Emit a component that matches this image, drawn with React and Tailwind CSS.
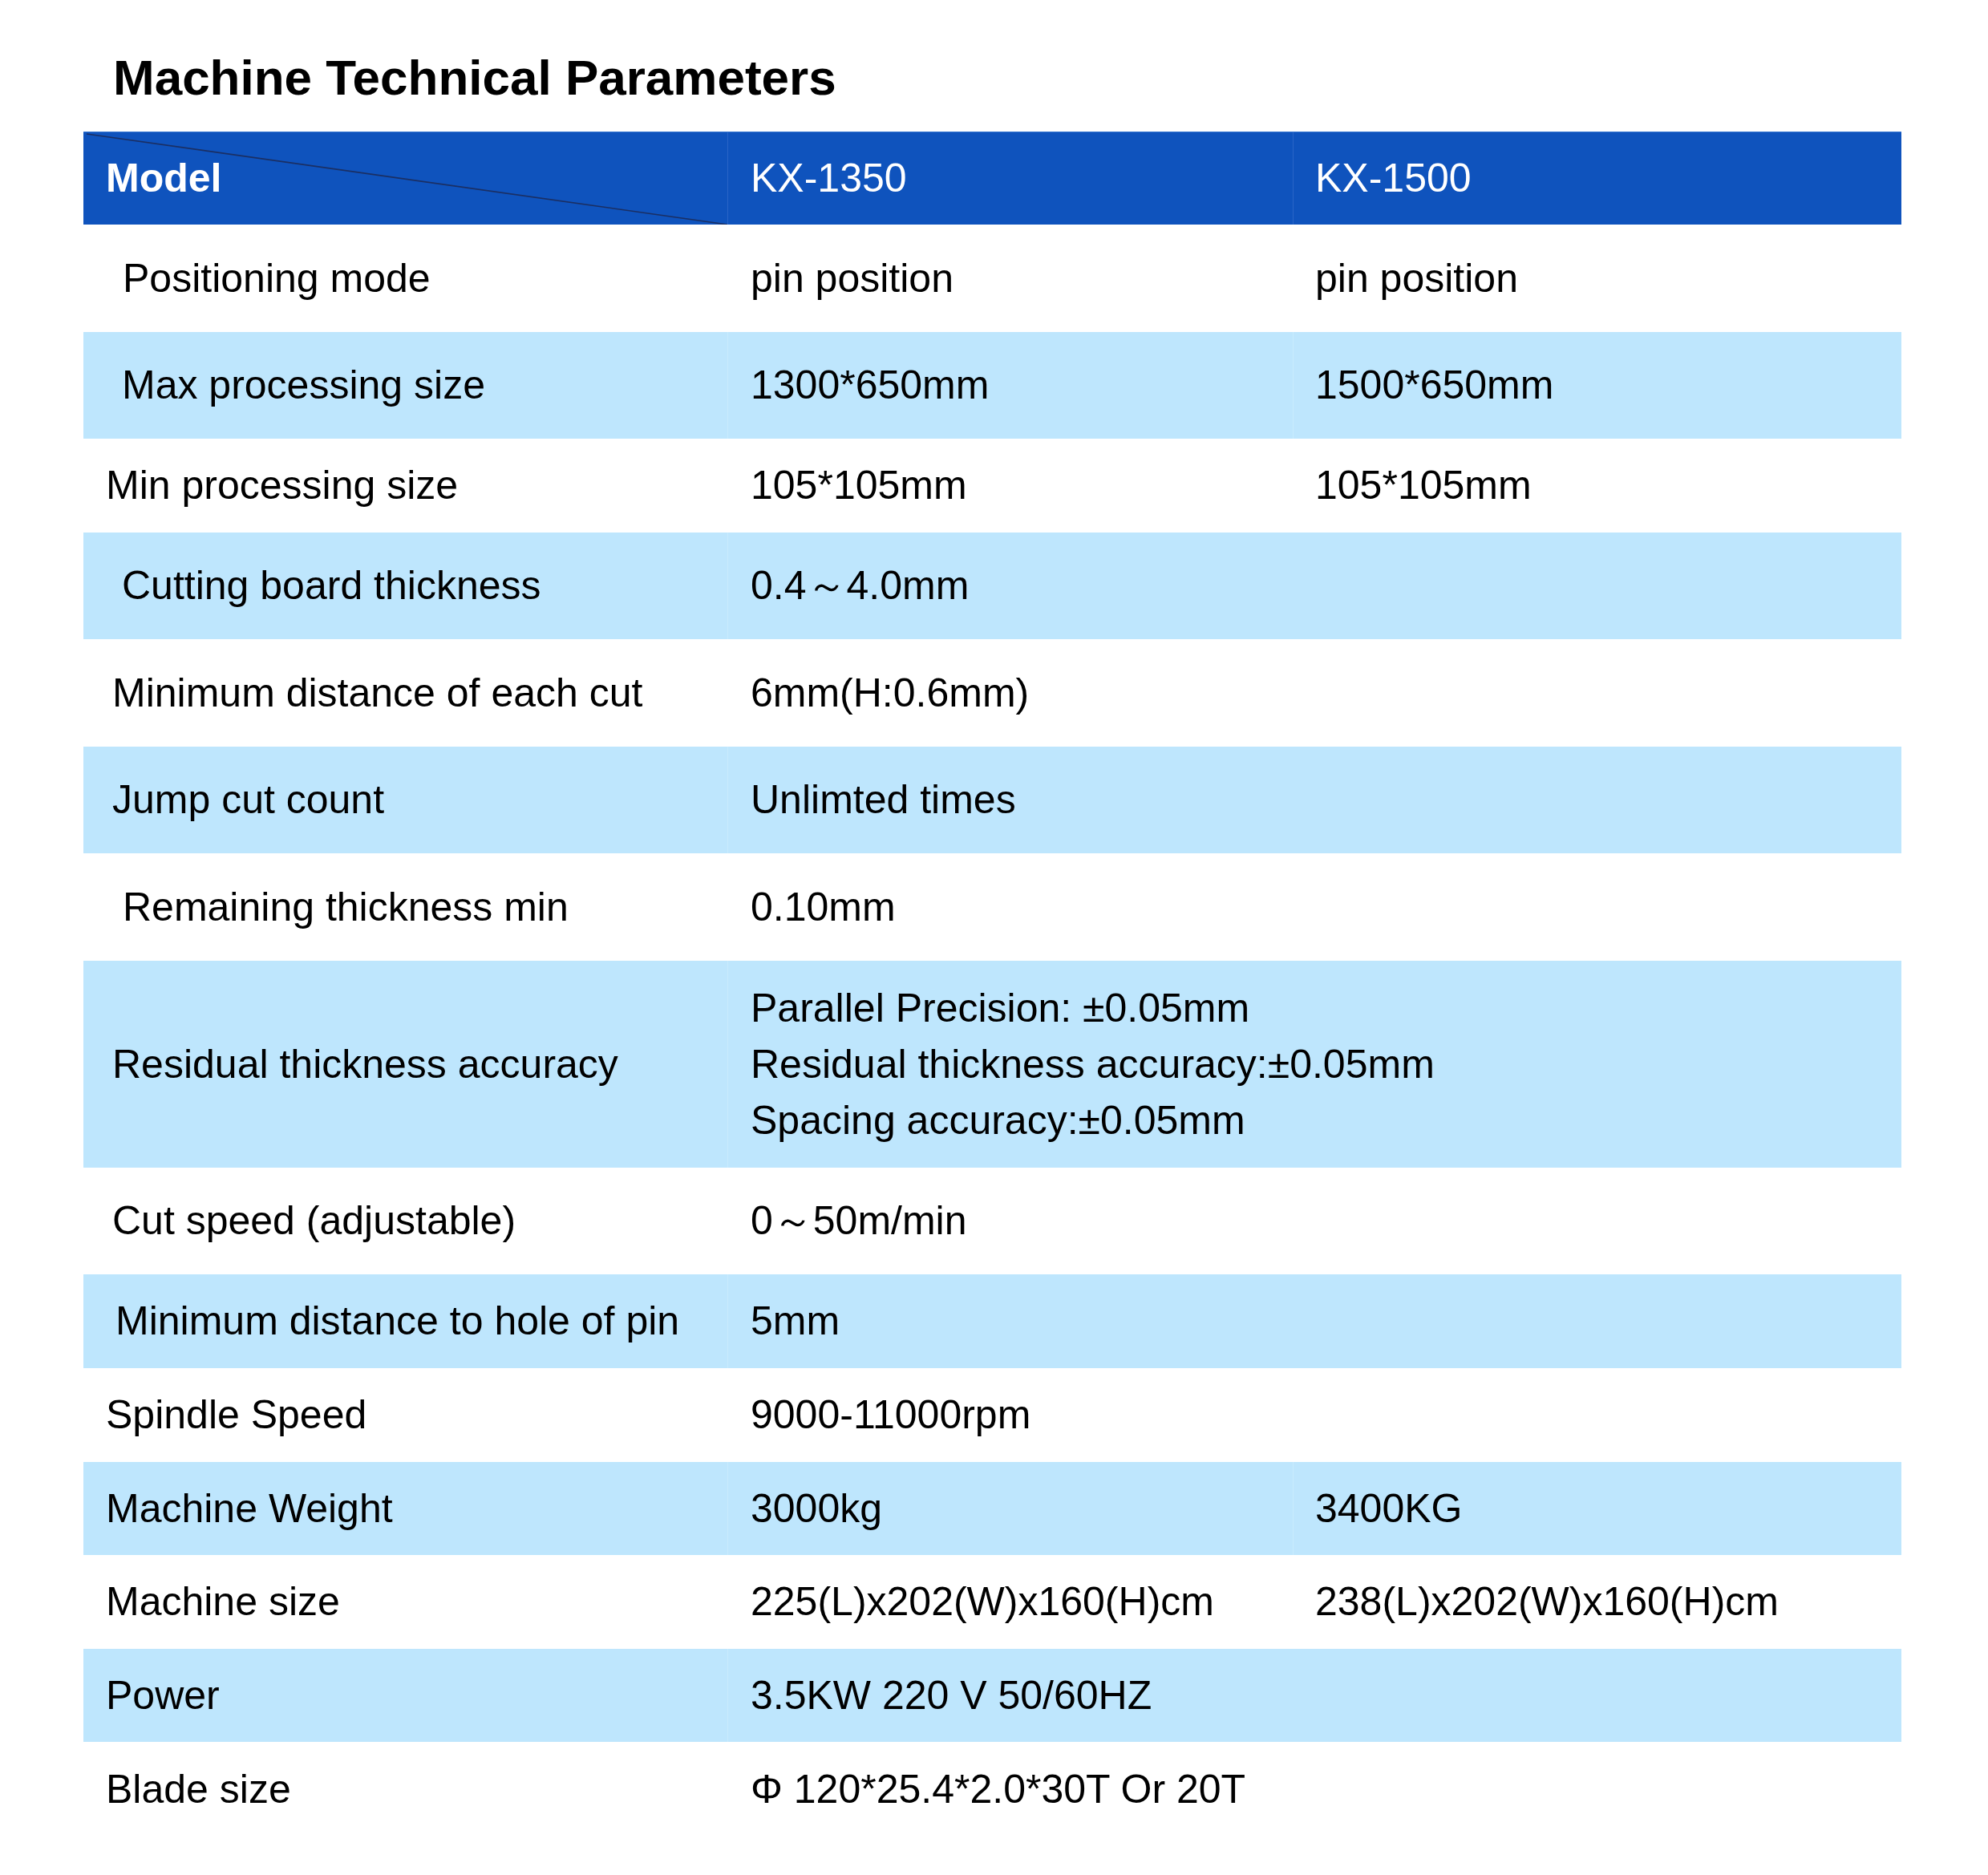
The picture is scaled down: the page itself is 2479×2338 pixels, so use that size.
import React from 'react';

// spec rows: label, left padding of label, row height, values
const rows = [
  { label: 'Positioning mode', pl: 'pl-[49px]', h: 'h-[134px]', a: 'pin position', b: 'pin position' },
  { label: 'Max processing size', pl: 'pl-[48px]', h: 'h-[133px]', a: '1300*650mm', b: '1500*650mm' },
  { label: 'Min processing size', pl: 'pl-[28px]', h: 'h-[117px]', a: '105*105mm', b: '105*105mm' },
  { label: 'Cutting board thickness', pl: 'pl-[48px]', h: 'h-[133px]', a: '0.4～4.0mm' },
  { label: 'Minimum distance of each cut', pl: 'pl-[36px]', h: 'h-[134px]', a: '6mm(H:0.6mm)' },
  { label: 'Jump cut count', pl: 'pl-[36px]', h: 'h-[133px]', a: 'Unlimted times' },
  { label: 'Remaining thickness min', pl: 'pl-[49px]', h: 'h-[134px]', a: '0.10mm' },
  {
    label: 'Residual thickness accuracy',
    pl: 'pl-[36px]',
    h: 'h-[258px]',
    a: ['Parallel Precision: ±0.05mm', 'Residual thickness accuracy:±0.05mm', 'Spacing accuracy:±0.05mm'],
  },
  { label: 'Cut speed (adjustable)', pl: 'pl-[36px]', h: 'h-[133px]', a: '0～50m/min' },
  { label: 'Minimum distance to hole of pin', pl: 'pl-[40px]', h: 'h-[117px]', a: '5mm' },
  { label: 'Spindle Speed', pl: 'pl-[28px]', h: 'h-[117px]', a: '9000-11000rpm' },
  { label: 'Machine Weight', pl: 'pl-[28px]', h: 'h-[116px]', a: '3000kg', b: '3400KG' },
  { label: 'Machine size', pl: 'pl-[28px]', h: 'h-[117px]', a: '225(L)x202(W)x160(H)cm', b: '238(L)x202(W)x160(H)cm' },
  { label: 'Power', pl: 'pl-[28px]', h: 'h-[116px]', a: '3.5KW 220 V 50/60HZ' },
  { label: 'Blade size', pl: 'pl-[28px]', h: 'h-[118px]', a: 'Φ 120*25.4*2.0*30T Or 20T' },
];

function Row({ row, shaded }) {
  const bg = shaded ? 'bg-[#bee6fd]' : 'bg-white';
  const line = shaded ? 'border-[#c9ebfd]' : 'border-white';
  return (
    <div className={`grid grid-cols-[803px_705px_759px] ${row.h} ${bg}`}>
      <div className={`flex items-center ${row.pl}`}>{row.label}</div>
      <div
        className={`flex flex-col justify-center pl-[28px] border-l ${line} ${row.b ? '' : 'col-span-2'}`}
      >
        {Array.isArray(row.a)
          ? row.a.map((t) => (
              <div key={t} className="leading-[70px] whitespace-nowrap">
                {t}
              </div>
            ))
          : <div className="whitespace-nowrap">{row.a}</div>}
      </div>
      {row.b && (
        <div className={`flex items-center pl-[27px] border-l ${line} whitespace-nowrap`}>{row.b}</div>
      )}
    </div>
  );
}

export default function App() {
  return (
    <div className="w-[2479px] h-[2338px] bg-white text-black font-['Liberation_Sans',Arial,sans-serif]">
      {/* Title */}
      <h1 className="pt-[66px] pl-[141px] text-[62px] leading-none font-bold">Machine Technical Parameters</h1>

      {/* Table */}
      <div className="mt-[36px] ml-[104px] w-[2267px] text-[50px]">
        {/* Header */}
        <div className="grid grid-cols-[803px_705px_759px] h-[116px] bg-[#0f53bd] text-white border-t border-[#3a78d2]">
          <div className="relative flex items-center pl-[28px] font-bold">
            <svg className="absolute inset-0" width="803" height="115" viewBox="0 0 803 115">
              <line x1="4" y1="2" x2="803" y2="115" stroke="#1b2f63" strokeWidth="1.6" />
            </svg>
            <span className="relative">Model</span>
          </div>
          <div className="flex items-center pl-[28px] border-l border-[#2a65c6]">KX-1350</div>
          <div className="flex items-center pl-[27px] border-l border-[#2a65c6]">KX-1500</div>
        </div>

        {rows.map((row, i) => (
          <Row key={row.label} row={row} shaded={i % 2 === 1} />
        ))}
      </div>
    </div>
  );
}
